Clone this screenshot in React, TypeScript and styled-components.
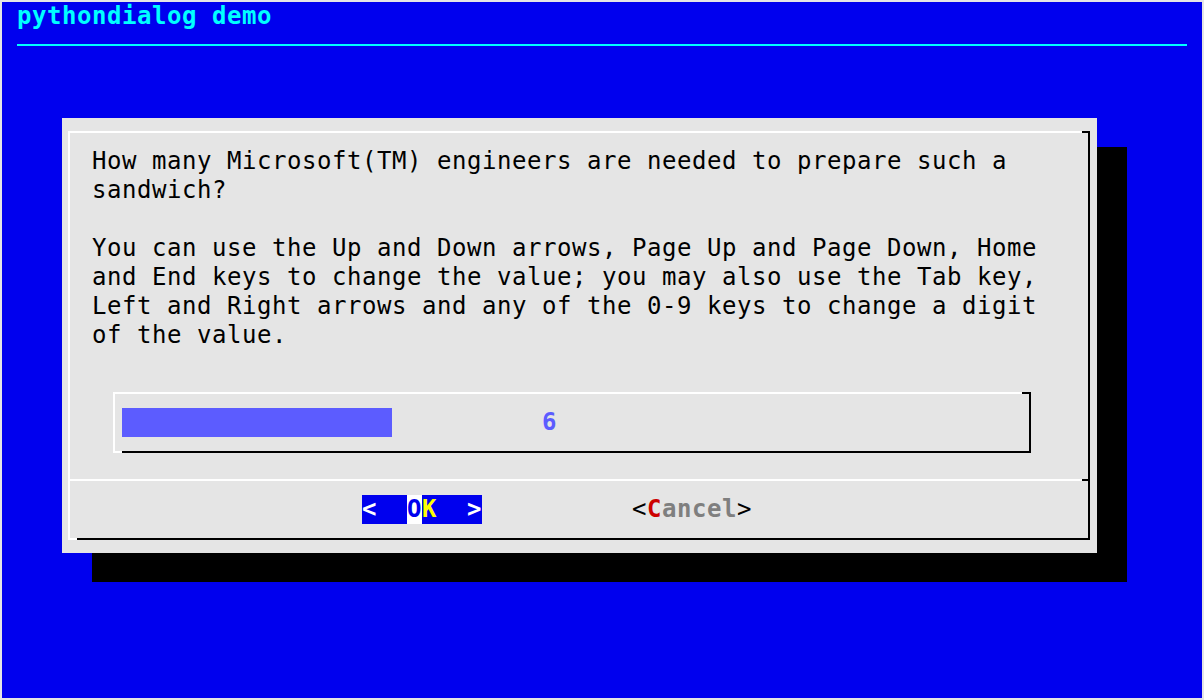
import React from "react";
import styled, { createGlobalStyle } from "styled-components";

const Global = createGlobalStyle`
  html, body { margin: 0; padding: 0; background: #e5e5e5; }
  body { overflow: hidden; }
`;

const Terminal = styled.div`
  width: 1200px;
  height: 696px;
  margin: 2px;
  background: #0000ee;
  font-family: "DejaVu Sans Mono", monospace;
  font-size: 24px;
  line-height: 29px;
  letter-spacing: 0.55px;
  display: flex;
  flex-direction: column;
  overflow: hidden;
`;

const Title = styled.div`
  height: 29px;
  padding-left: 15px;
  color: #00ffff;
  font-weight: bold;
  white-space: pre;
`;

const TitleRow = styled.div`
  height: 29px;
  display: flex;
  flex-direction: column;
`;

const TitleRule = styled.div`
  margin: 13px 15px 0;
  height: 2px;
  background: #00ffff;
`;

const Dialog = styled.div`
  margin: 58px 0 0 60px;
  width: 1035px;
  height: 435px;
  box-sizing: border-box;
  padding: 13px 7px 13px 6px;
  background: #e5e5e5;
  box-shadow: 30px 29px 0 0 #000;
  display: flex;
`;

const Framed = styled.div<{ $topCorner: number; $bottomCorner: number }>`
  position: relative;
  box-sizing: border-box;
  border-top: 2px solid #ffffff;
  border-left: 2px solid #ffffff;
  border-right: 2px solid #000000;
  border-bottom: 2px solid #000000;
  &::before {
    content: "";
    position: absolute;
    top: -2px;
    right: -2px;
    width: ${(p) => p.$topCorner}px;
    height: 2px;
    background: #000;
  }
  &::after {
    content: "";
    position: absolute;
    left: -2px;
    bottom: -2px;
    width: ${(p) => p.$bottomCorner}px;
    height: 2px;
    background: #fff;
  }
`;

const Frame = styled(Framed)`
  flex: 1;
  display: flex;
  flex-direction: column;
`;

const Message = styled.div`
  padding: 14px 0 0 22px;
  color: #000;
  white-space: pre;
  height: 203px;
`;

const GaugeBox = styled(Framed)`
  margin: 42px 0 0 43px;
  width: 918px;
  height: 61px;
  padding: 14px 0 14px 7px;
  display: flex;
  align-items: stretch;
`;

const Bar = styled.div`
  height: 29px;
  background: #5c5cff;
`;

const GaugeValue = styled.span`
  margin-left: 150px;
  color: #5c5cff;
  font-weight: bold;
  white-space: pre;
`;

const Separator = styled.div`
  margin-top: 26px;
  height: 2px;
  background: linear-gradient(to right, #ffffff calc(100% - 6px), #000000 0);
`;

const ButtonRow = styled.div`
  padding: 14px 0 14px 292px;
  height: 29px;
  display: flex;
`;

const Button = styled.div<{ $active?: boolean }>`
  display: flex;
  width: 120px;
  height: 29px;
  background: ${(p) => (p.$active ? "#0000ee" : "transparent")};
  & + & {
    margin-left: 150px;
  }
`;

const Cell = styled.span<{ $color: string; $bg?: string; $bold?: boolean }>`
  display: inline-block;
  width: 15px;
  height: 29px;
  letter-spacing: 0;
  text-align: left;
  color: ${(p) => p.$color};
  background: ${(p) => p.$bg ?? "transparent"};
  font-weight: ${(p) => (p.$bold ? "bold" : "normal")};
  white-space: pre;
`;

const message = [
  "How many Microsoft(TM) engineers are needed to prepare such a",
  "sandwich?",
  "",
  "You can use the Up and Down arrows, Page Up and Page Down, Home",
  "and End keys to change the value; you may also use the Tab key,",
  "Left and Right arrows and any of the 0-9 keys to change a digit",
  "of the value.",
].join("\n");

export default function App() {
  return (
    <>
      <Global />
      <Terminal>
        <Title>pythondialog demo</Title>
        <TitleRow>
          <TitleRule />
        </TitleRow>
        <Dialog>
          <Frame $topCorner={8} $bottomCorner={9}>
            <Message>{message}</Message>
            <GaugeBox $topCorner={9} $bottomCorner={9}>
              <Bar style={{ width: 270 }} />
              <GaugeValue>6</GaugeValue>
            </GaugeBox>
            <Separator />
            <ButtonRow>
              <Button $active>
                <Cell $color="#ffffff" $bold>{"<"}</Cell>
                <Cell $color="#ffffff">{" "}</Cell>
                <Cell $color="#ffffff">{" "}</Cell>
                <Cell $color="#0000ee" $bg="#ffffff" $bold>O</Cell>
                <Cell $color="#ffff00" $bold>K</Cell>
                <Cell $color="#ffffff">{" "}</Cell>
                <Cell $color="#ffffff">{" "}</Cell>
                <Cell $color="#ffffff" $bold>{">"}</Cell>
              </Button>
              <Button>
                <Cell $color="#000000">{"<"}</Cell>
                <Cell $color="#cd0000" $bold>C</Cell>
                <Cell $color="#7f7f7f" $bold>a</Cell>
                <Cell $color="#7f7f7f" $bold>n</Cell>
                <Cell $color="#7f7f7f" $bold>c</Cell>
                <Cell $color="#7f7f7f" $bold>e</Cell>
                <Cell $color="#7f7f7f" $bold>l</Cell>
                <Cell $color="#000000">{">"}</Cell>
              </Button>
            </ButtonRow>
          </Frame>
        </Dialog>
      </Terminal>
    </>
  );
}
